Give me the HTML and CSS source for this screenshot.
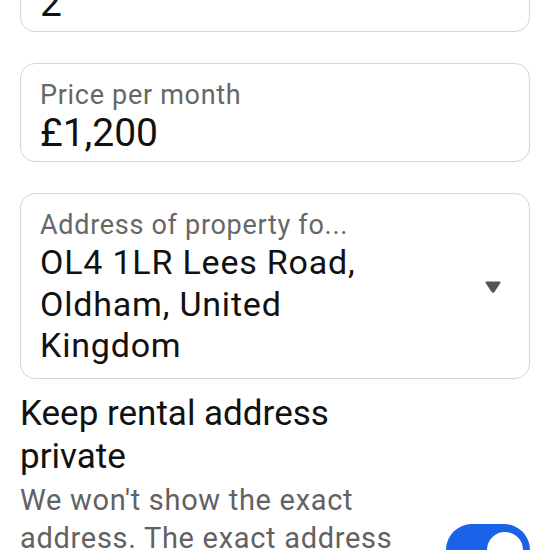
FILE: index.html
```html
<!DOCTYPE html>
<html lang="en">
<head>
  <meta charset="UTF-8">
  <meta name="viewport" content="width=device-width, initial-scale=1.0">
  <title>Rental listing</title>
  <link rel="stylesheet" href="styles.css">
</head>
<body>
  <div class="form">
    <div class="field">
      <div class="field-label">Bathrooms</div>
      <div class="field-value price">2</div>
    </div>

    <div class="field">
      <div class="field-label">Price per month</div>
      <div class="field-value price">£1,200</div>
    </div>

    <div class="field select">
      <div class="field-body">
        <div class="field-label">Address of property fo...</div>
        <div class="field-value address">OL4 1LR Lees Road, Oldham, United Kingdom</div>
      </div>
      <svg class="caret" width="16" height="12" viewBox="0 0 16 12">
        <path d="M1.5 1.5 H14.5 L8.8 10.2 Q8 11.2 7.2 10.2 Z" fill="#555" stroke="#555" stroke-width="2" stroke-linejoin="round"/>
      </svg>
    </div>

    <div class="toggle-row">
      <div class="toggle-text">
        <div class="toggle-title">Keep rental address private</div>
        <div class="toggle-desc">We won't show the exact address. The exact address will only be shared with people you message.</div>
      </div>
      <div class="switch on">
        <div class="knob"></div>
      </div>
    </div>
  </div>
</body>
</html>
```

FILE: styles.css
```css
body {
  margin: 0;
  background: #fff;
  font-family: Roboto, "Noto Sans", Arial, sans-serif;
  color: #111;
  overflow: hidden;
}
.form {
  margin-top: -67px;
  padding: 0 20px;
  display: flex;
  flex-direction: column;
  gap: 31px;
}
.field {
  border: 1.5px solid #d6d6d6;
  border-radius: 15px;
  padding: 14px 19px 7px;
}
.field-label {
  font-size: 27px;
  line-height: 34px;
  letter-spacing: 0.7px;
  color: #676767;
  white-space: nowrap;
}
.field-value.price {
  font-size: 39px;
  line-height: 42px;
}
.field-value.address {
  font-size: 34px;
  line-height: 41.5px;
  letter-spacing: 0.8px;
  max-width: 370px;
}
.select {
  display: flex;
  align-items: center;
  padding-bottom: 11px;
}
.field-body {
  flex: 1;
}
.caret {
  margin-right: 9px;
}
.toggle-row {
  display: flex;
  align-items: flex-start;
  gap: 15px;
  margin-top: -18px;
}
.toggle-text {
  flex: 1;
}
.toggle-title {
  font-size: 35px;
  line-height: 43px;
}
.toggle-desc {
  margin-top: 3px;
  font-size: 29px;
  line-height: 38px;
  letter-spacing: 0.7px;
  color: #626262;
}
.switch {
  width: 84px;
  height: 52px;
  border-radius: 26px;
  background: #1a62e8;
  margin-top: 132px;
  flex-shrink: 0;
  display: flex;
  align-items: center;
  justify-content: flex-end;
  padding: 0 3px;
  box-sizing: border-box;
}
.knob {
  width: 44px;
  height: 44px;
  border-radius: 50%;
  background: #fff;
  border: 4px solid #1a62e8;
  box-sizing: border-box;
}
```
